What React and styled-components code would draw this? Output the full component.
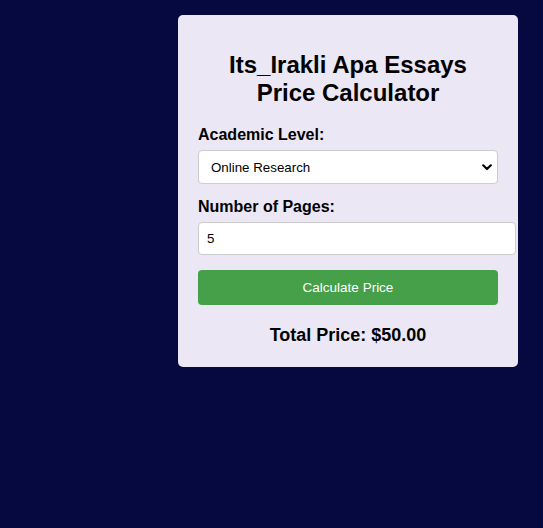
import * as React from 'react';
import { useState } from 'react';
import styled, { createGlobalStyle } from 'styled-components';

const GlobalStyle = createGlobalStyle`
  html, body {
    margin: 0;
    padding: 0;
    background: #050940;
    font-family: 'Liberation Sans', Arial, sans-serif;
  }
`;

// rates per page, by level
const rates = {
  online: 10,
  highschool: 12,
  college: 15,
  masters: 20,
};

const Page = styled.div`
  min-height: 528px;
  padding: 15px 0 0 178px;
  box-sizing: border-box;
`;

const Card = styled.div`
  width: 300px;
  padding: 20px 20px 21px;
  background: #ebe7f5;
  border-radius: 5px;
`;

const Title = styled.h2`
  margin: 16px 0 20px;
  font-size: 24px;
  line-height: 27.7px;
  font-weight: bold;
  text-align: center;
  color: #000;
`;

const Label = styled.label`
  display: block;
  font-size: 16px;
  line-height: 18px;
  font-weight: bold;
  color: #000;
  margin-bottom: 6px;
`;

const SelectWrap = styled.div`
  position: relative;
  margin-bottom: 14px;
`;

const Select = styled.select`
  appearance: none;
  display: block;
  width: 100%;
  height: 34px;
  padding: 0 30px 0 12px;
  border: 1px solid #ccc;
  border-radius: 4px;
  background: #fff;
  font-family: 'Liberation Sans', Arial, sans-serif;
  font-size: 13.33px;
  color: #000;
  outline: none;
`;

const Chevron = styled.svg`
  position: absolute;
  right: 6px;
  top: 14px;
  pointer-events: none;
`;

const Input = styled.input`
  display: block;
  width: 100%;
  height: 31px;
  padding: 0 8px;
  margin: 0 0 15px;
  border: 1px solid #ccc;
  border-radius: 4px;
  background: #fff;
  font-family: 'Liberation Sans', Arial, sans-serif;
  font-size: 13.33px;
  color: #000;
  outline: none;
`;

const Button = styled.button`
  display: block;
  width: 100%;
  height: 35px;
  border: none;
  border-radius: 4px;
  background: #45a049;
  color: #fff;
  font-family: 'Liberation Sans', Arial, sans-serif;
  font-size: 13.5px;
  cursor: pointer;
`;

const Total = styled.div`
  margin-top: 20px;
  font-size: 18px;
  line-height: 21px;
  font-weight: bold;
  text-align: center;
  color: #000;
`;

export default function App() {
  const [level, setLevel] = useState('online');
  const [pages, setPages] = useState('5');
  const [total, setTotal] = useState(50);

  const calculate = () => {
    const n = parseInt(pages, 10) || 0;
    setTotal(n * rates[level]);
  };

  return (
    <>
      <GlobalStyle />
      <Page>
        <Card>
          <Title>
            Its_Irakli Apa Essays
            <br />
            Price Calculator
          </Title>
          <Label htmlFor='level'>Academic Level:</Label>
          <SelectWrap>
            <Select
              id='level'
              value={level}
              onChange={(e) => setLevel(e.target.value)}>
              <option value='online'>Online Research</option>
              <option value='highschool'>High School</option>
              <option value='college'>College</option>
              <option value='masters'>Masters</option>
            </Select>
            <Chevron width='10' height='7' viewBox='0 0 10 7'>
              <path
                d='M1.2 1.3 L5 5 L8.8 1.3'
                fill='none'
                stroke='#000'
                strokeWidth='2.2'
                strokeLinecap='round'
                strokeLinejoin='round'
              />
            </Chevron>
          </SelectWrap>
          <Label htmlFor='pages'>Number of Pages:</Label>
          <Input
            id='pages'
            type='text'
            value={pages}
            onChange={(e) => setPages(e.target.value)}
          />
          <Button onClick={calculate}>Calculate Price</Button>
          <Total>Total Price: ${total.toFixed(2)}</Total>
        </Card>
      </Page>
    </>
  );
}
